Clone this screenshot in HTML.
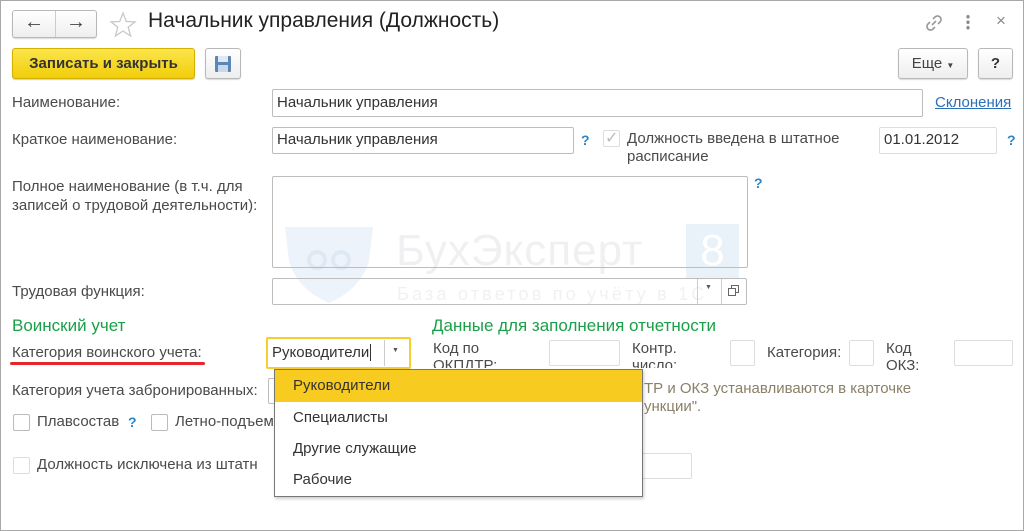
<!DOCTYPE html>
<html><head><meta charset="utf-8"><style>
*{box-sizing:border-box;margin:0;padding:0}
body{width:1024px;height:531px;background:#fff;font-family:"Liberation Sans",sans-serif;font-size:15px;color:#444;position:relative;overflow:hidden}
.frame{position:absolute;left:0;top:0;width:1024px;height:531px;border:1px solid #a8a8a8}
.a{position:absolute;white-space:nowrap}
.in{position:absolute;border:1px solid #bdbdbd;border-radius:2px;background:#fff;font-size:15px;color:#333;padding-left:4px;line-height:24px}
.btn{position:absolute;border:1px solid #b8b8b8;border-radius:3px;background:linear-gradient(#fff,#eee);box-shadow:0 1px 1px rgba(0,0,0,.15)}
.q{position:absolute;color:#2a86c9;font-weight:bold;font-size:14px}
.cb{position:absolute;width:17px;height:17px;border:1px solid #bbb;border-radius:2px;background:#fff}
.lbl{position:absolute;font-size:15px;color:#4a4a4a;white-space:nowrap}
.green{position:absolute;color:#1aa048;font-size:17px;white-space:nowrap}
</style></head><body>
<!-- watermark -->
<svg class="a" style="left:283px;top:225px" width="92" height="80"><path d="M2 2 H90 L86 36 Q78 64 46 78 Q14 64 6 36 Z" fill="#edf3fa"/><circle cx="34" cy="35" r="8" fill="none" stroke="#dfe9f4" stroke-width="4"/><circle cx="58" cy="35" r="8" fill="none" stroke="#dfe9f4" stroke-width="4"/></svg>
<div class="a" style="left:396px;top:226px;font-size:44px;color:#f0f0f2;letter-spacing:1px">БухЭксперт</div>
<div class="a" style="left:686px;top:224px;width:53px;height:54px;background:#e9f1f9;color:#fff;font-size:44px;text-align:center;line-height:54px">8</div>
<div class="a" style="left:397px;top:284px;font-size:18px;color:#f1f1f3;letter-spacing:3.2px">База ответов по учёту в 1С</div>

<!-- header -->
<div class="btn" style="left:12px;top:10px;width:85px;height:28px"></div>
<div class="a" style="left:55px;top:11px;width:1px;height:26px;background:#ccc"></div>
<div class="a" style="left:24px;top:11px;font-size:20px;color:#444;font-weight:bold">←</div>
<div class="a" style="left:66px;top:11px;font-size:20px;color:#444;font-weight:bold">→</div>
<svg class="a" style="left:109px;top:11px" width="28" height="27"><path d="M14 2 L17.3 10.5 L26 10.8 L19.2 16.3 L21.6 25 L14 20 L6.4 25 L8.8 16.3 L2 10.8 L10.7 10.5 Z" fill="none" stroke="#c8c8c8" stroke-width="1.3"/></svg>
<div class="a" style="left:148px;top:9px;font-size:21px;color:#222">Начальник управления (Должность)</div>
<svg class="a" style="left:924px;top:13px" width="20" height="20"><g fill="none" stroke="#999" stroke-width="1.6"><path d="M8 12 L12 8"/><path d="M9 6 L11 4 A3 3 0 0 1 16 9 L14 11"/><path d="M11 14 L9 16 A3 3 0 0 1 4 11 L6 9"/></g></svg>
<div class="a" style="left:966px;top:14px;width:4px;height:16px;background:radial-gradient(circle,#888 1.6px,transparent 1.8px) 0 0/4px 5.5px"></div>
<div class="a" style="left:996px;top:11px;font-size:17px;color:#888">×</div>

<!-- toolbar -->
<div class="a" style="left:12px;top:48px;width:183px;height:31px;border:1px solid #d4b000;border-radius:3px;background:linear-gradient(#fbe54a,#f1cd0a);box-shadow:0 1px 1px rgba(0,0,0,.2);font-weight:bold;color:#333;text-align:center;line-height:29px;font-size:15px">Записать и закрыть</div>
<div class="btn" style="left:205px;top:48px;width:36px;height:31px"></div>
<svg class="a" style="left:214px;top:55px" width="18" height="18"><rect x="1" y="1" width="16" height="16" rx="1" fill="#5b86b8"/><rect x="4" y="1" width="10" height="6" fill="#dfe8f3"/><rect x="4" y="10" width="10" height="7" fill="#c9d7e8"/></svg>
<div class="btn" style="left:898px;top:48px;width:70px;height:31px;text-align:center;line-height:29px;color:#444">Еще <span style="font-size:8px">▼</span></div>
<div class="btn" style="left:978px;top:48px;width:35px;height:31px;text-align:center;line-height:29px;font-weight:bold;color:#333">?</div>

<!-- rows -->
<div class="lbl" style="left:12px;top:94px">Наименование:</div>
<div class="in" style="left:272px;top:89px;width:651px;height:28px;line-height:26px">Начальник управления</div>
<div class="a" style="left:935px;top:94px;color:#2a6fb8;text-decoration:underline">Склонения</div>

<div class="lbl" style="left:12px;top:131px">Краткое наименование:</div>
<div class="in" style="left:272px;top:127px;width:302px;height:27px">Начальник управления</div>
<div class="q" style="left:581px;top:132px">?</div>
<div class="cb" style="left:603px;top:130px;border-color:#ddd"></div>
<div class="a" style="left:605px;top:128px;color:#bbb;font-size:16px">✓</div>
<div class="lbl" style="left:627px;top:130px;line-height:18px">Должность введена в штатное<br>расписание</div>
<div class="in" style="left:879px;top:127px;width:118px;height:27px;border-color:#ddd">01.01.2012</div>
<div class="q" style="left:1007px;top:132px">?</div>

<div class="lbl" style="left:12px;top:177px;line-height:19px">Полное наименование (в т.ч. для<br>записей о трудовой деятельности):</div>
<div class="in" style="left:272px;top:176px;width:476px;height:92px;background:transparent"></div>
<div class="q" style="left:754px;top:175px">?</div>

<div class="lbl" style="left:12px;top:283px">Трудовая функция:</div>
<div class="in" style="left:272px;top:278px;width:475px;height:27px;background:transparent"></div>
<div class="a" style="left:697px;top:279px;width:1px;height:25px;background:#ccc"></div>
<div class="a" style="left:721px;top:279px;width:1px;height:25px;background:#ccc"></div>
<div class="a" style="left:705px;top:284px;font-size:7px;color:#555">▼</div>
<svg class="a" style="left:727px;top:284px" width="13" height="13"><g fill="#fff" stroke="#666"><rect x="4.5" y="1.5" width="7" height="7"/><rect x="1.5" y="4.5" width="7" height="7"/></g></svg>

<div class="green" style="left:12px;top:316px">Воинский учет</div>
<div class="green" style="left:432px;top:316px">Данные для заполнения отчетности</div>

<div class="lbl" style="left:12px;top:344px">Категория воинского учета:</div>
<div class="a" style="left:10px;top:362px;width:195px;height:3px;background:#e5262a;border-radius:2px"></div>
<div class="a" style="left:266px;top:337px;width:145px;height:32px;border:2px solid #f5cf30;background:#fff;border-radius:2px"></div>
<div class="a" style="left:272px;top:344px;font-size:15px;color:#333">Руководители<span style="border-left:1px solid #333;margin-left:1px"></span></div>
<div class="a" style="left:384px;top:340px;width:1px;height:26px;background:#ccc"></div>
<div class="a" style="left:392px;top:347px;font-size:7px;color:#555">▼</div>

<div class="lbl" style="left:433px;top:340px;line-height:17px;height:28px;overflow:hidden">Код по<br>ОКПДТР:</div>
<div class="in" style="left:549px;top:340px;width:71px;height:26px;border-color:#ddd"></div>
<div class="lbl" style="left:632px;top:340px;line-height:17px;height:28px;overflow:hidden">Контр.<br>число:</div>
<div class="in" style="left:730px;top:340px;width:25px;height:26px;border-color:#ddd"></div>
<div class="lbl" style="left:767px;top:344px">Категория:</div>
<div class="in" style="left:849px;top:340px;width:25px;height:26px;border-color:#ddd"></div>
<div class="lbl" style="left:886px;top:340px;line-height:17px">Код<br>ОКЗ:</div>
<div class="in" style="left:954px;top:340px;width:59px;height:26px;border-color:#ddd"></div>

<div class="lbl" style="left:12px;top:382px">Категория учета забронированных:</div>
<div class="in" style="left:268px;top:378px;width:20px;height:26px"></div>
<div class="a" style="left:644px;top:380px;color:#8a8068;line-height:18px;font-size:15px">ТР и ОКЗ устанавливаются в карточке<br>ункции".</div>

<div class="cb" style="left:13px;top:414px"></div>
<div class="lbl" style="left:37px;top:413px">Плавсостав</div>
<div class="q" style="left:128px;top:414px">?</div>
<div class="cb" style="left:151px;top:414px"></div>
<div class="lbl" style="left:175px;top:413px">Летно-подъем</div>

<div class="cb" style="left:13px;top:457px;border-color:#ddd"></div>
<div class="lbl" style="left:37px;top:456px">Должность исключена из штатн</div>
<div class="in" style="left:630px;top:453px;width:62px;height:26px;border-color:#ddd"></div>

<!-- dropdown -->
<div class="a" style="left:274px;top:369px;width:369px;height:128px;background:#fff;border:1px solid #777;box-shadow:1px 2px 3px rgba(0,0,0,.2);font-size:15px">
<div style="height:32px;background:#f7cb1f;padding-left:18px;line-height:32px;color:#333">Руководители</div>
<div style="height:31px;padding-left:18px;line-height:31px;color:#333">Специалисты</div>
<div style="height:31px;padding-left:18px;line-height:31px;color:#333">Другие служащие</div>
<div style="height:31px;padding-left:18px;line-height:31px;color:#333">Рабочие</div>
</div>
<div class="frame"></div>
</body></html>
